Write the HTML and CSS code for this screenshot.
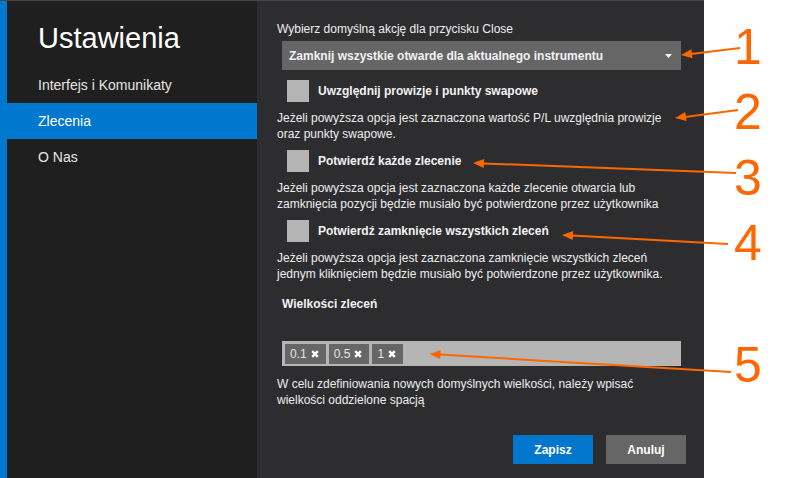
FILE: index.html
```html
<!DOCTYPE html>
<html lang="pl">
<head>
<meta charset="utf-8">
<title>Ustawienia</title>
<link rel="stylesheet" href="styles.css">
</head>
<body>
<div class="app">
  <aside class="sidebar">
    <h1 class="title">Ustawienia</h1>
    <nav class="nav">
      <div class="nav-item">Interfejs i Komunikaty</div>
      <div class="nav-item active">Zlecenia</div>
      <div class="nav-item">O Nas</div>
    </nav>
  </aside>
  <main class="main">
    <div class="text">Wybierz domyślną akcję dla przycisku Close</div>
    <div class="select">
      <span>Zamknij wszystkie otwarde dla aktualnego instrumentu</span>
      <svg class="caret" width="7" height="4" viewBox="0 0 7 4"><polygon points="0,0 7,0 3.5,4" fill="#f0f0f0"/></svg>
    </div>
    <div class="check-row first">
      <span class="checkbox"></span>
      <span class="check-label">Uwzględnij prowizje i punkty swapowe</span>
    </div>
    <div class="desc">Jeżeli powyższa opcja jest zaznaczona wartość P/L uwzględnia prowizje<br>oraz punkty swapowe.</div>
    <div class="check-row">
      <span class="checkbox"></span>
      <span class="check-label">Potwierdź każde zlecenie</span>
    </div>
    <div class="desc">Jeżeli powyższa opcja jest zaznaczona każde zlecenie otwarcia lub<br>zamknięcia pozycji będzie musiało być potwierdzone przez użytkownika</div>
    <div class="check-row">
      <span class="checkbox"></span>
      <span class="check-label">Potwierdź zamknięcie wszystkich zleceń</span>
    </div>
    <div class="desc">Jeżeli powyższa opcja jest zaznaczona zamknięcie wszystkich zleceń<br>jednym kliknięciem będzie musiało być potwierdzone przez użytkownika.</div>
    <div class="section-label">Wielkości zleceń</div>
    <div class="tags">
      <span class="tag">0.1<svg class="x" width="8" height="8" viewBox="0 0 8 8"><path d="M1.2 1.2L6.8 6.8M6.8 1.2L1.2 6.8" stroke="#fff" stroke-width="2.4"/></svg></span>
      <span class="tag">0.5<svg class="x" width="8" height="8" viewBox="0 0 8 8"><path d="M1.2 1.2L6.8 6.8M6.8 1.2L1.2 6.8" stroke="#fff" stroke-width="2.4"/></svg></span>
      <span class="tag">1<svg class="x" width="8" height="8" viewBox="0 0 8 8"><path d="M1.2 1.2L6.8 6.8M6.8 1.2L1.2 6.8" stroke="#fff" stroke-width="2.4"/></svg></span>
    </div>
    <div class="help">W celu zdefiniowania nowych domyślnych wielkości, należy wpisać<br>wielkości oddzielone spacją</div>
    <div class="buttons">
      <button class="btn primary">Zapisz</button>
      <button class="btn secondary">Anuluj</button>
    </div>
  </main>
</div>
<svg class="annotations" width="791" height="478" viewBox="0 0 791 478">
  <g stroke="#ff6600" stroke-width="2" fill="none">
    <line x1="740" y1="48" x2="691" y2="54"/>
    <line x1="738" y1="110" x2="685" y2="117"/>
    <line x1="736" y1="173" x2="483" y2="163.4"/>
    <line x1="728" y1="244" x2="572" y2="235.5"/>
    <line x1="731" y1="372" x2="440" y2="354.6"/>
  </g>
  <g fill="#ff6600">
    <polygon points="681,55 691.4,49.2 692.4,58.2"/>
    <polygon points="675,118 685.3,112.1 686.5,121.1"/>
    <polygon points="473,163 484.2,158.9 483.8,167.9"/>
    <polygon points="562,235 573.2,231.1 572.7,240.1"/>
    <polygon points="429.5,354 440.7,350.1 440.2,359.1"/>
  </g>
  <g class="digits" fill="#ff6600" text-anchor="middle">
    <text x="748" y="63.5">1</text>
    <text x="748" y="129">2</text>
    <text x="748" y="194.5">3</text>
    <text x="748" y="260">4</text>
    <text x="748" y="381.5">5</text>
  </g>
</svg>
</body>
</html>
```
FILE: styles.css
```css
html, body {
  margin: 0;
  padding: 0;
}
body {
  background: #ffffff;
  font-family: "Liberation Sans", Arial, sans-serif;
  width: 791px;
  height: 478px;
  overflow: hidden;
  position: relative;
}
.app {
  display: flex;
  width: 704px;
  height: 478px;
  box-sizing: border-box;
  border-top: 1px solid #454547;
}
.sidebar {
  width: 257px;
  box-sizing: border-box;
  background: #1f1f1f;
  border-left: 7px solid #0078cf;
}
.title {
  margin: 20px 0 12px 31px;
  font-size: 29px;
  line-height: 34px;
  font-weight: normal;
  color: #ffffff;
}
.nav-item {
  height: 36px;
  line-height: 36px;
  padding-left: 31px;
  font-size: 14px;
  color: #e6e6e6;
}
.nav-item.active {
  background: #0078cf;
  color: #ffffff;
}
.main {
  flex: 1;
  background: #2d2d30;
  padding: 20px 18px 0 20px;
  display: flex;
  flex-direction: column;
  font-size: 12px;
  line-height: 16px;
  color: #ededed;
}
.main > * {
  flex: none;
}
.select {
  margin: 4px 0 0 5px;
  width: 399px;
  height: 29px;
  box-sizing: border-box;
  background: #666666;
  display: flex;
  align-items: center;
  justify-content: space-between;
  padding: 0 9px 0 7px;
  font-weight: bold;
  color: #f2f2f2;
}
.caret {
  display: block;
  margin-top: 1px;
}
.check-row {
  display: flex;
  align-items: center;
  gap: 9px;
  margin: 8px 0 0 10px;
}
.check-row.first {
  margin-top: 10px;
}
.checkbox {
  width: 22px;
  height: 22px;
  background: #b4b4b4;
  flex: none;
}
.check-label {
  font-weight: bold;
  color: #f2f2f2;
}
.desc {
  margin-top: 8px;
}
.section-label {
  margin: 14px 0 0 5px;
  font-weight: bold;
  color: #f2f2f2;
}
.tags {
  margin: 29px 0 0 5px;
  width: 399px;
  height: 25px;
  box-sizing: border-box;
  background: #b5b5b5;
  padding: 3px 3px 2px;
  display: flex;
  gap: 3px;
}
.tag {
  background: #666666;
  color: #e4e4e4;
  display: flex;
  align-items: center;
  gap: 4px;
  padding: 0 7px 0 5px;
  font-size: 12px;
}
.x {
  display: block;
}
.help {
  margin-top: 10px;
}
.buttons {
  display: flex;
  justify-content: flex-end;
  gap: 13px;
  margin-top: 27px;
}
.btn {
  width: 80px;
  height: 29px;
  border: none;
  margin: 0;
  padding: 0;
  font-family: "Liberation Sans", Arial, sans-serif;
  font-size: 12px;
  font-weight: bold;
  color: #ffffff;
}
.btn.primary {
  background: #0077cc;
}
.btn.secondary {
  background: #666666;
}
.annotations {
  position: absolute;
  top: 0;
  left: 0;
  pointer-events: none;
}
.digits {
  font-family: "Liberation Sans", Arial, sans-serif;
  font-size: 50px;
}
```
